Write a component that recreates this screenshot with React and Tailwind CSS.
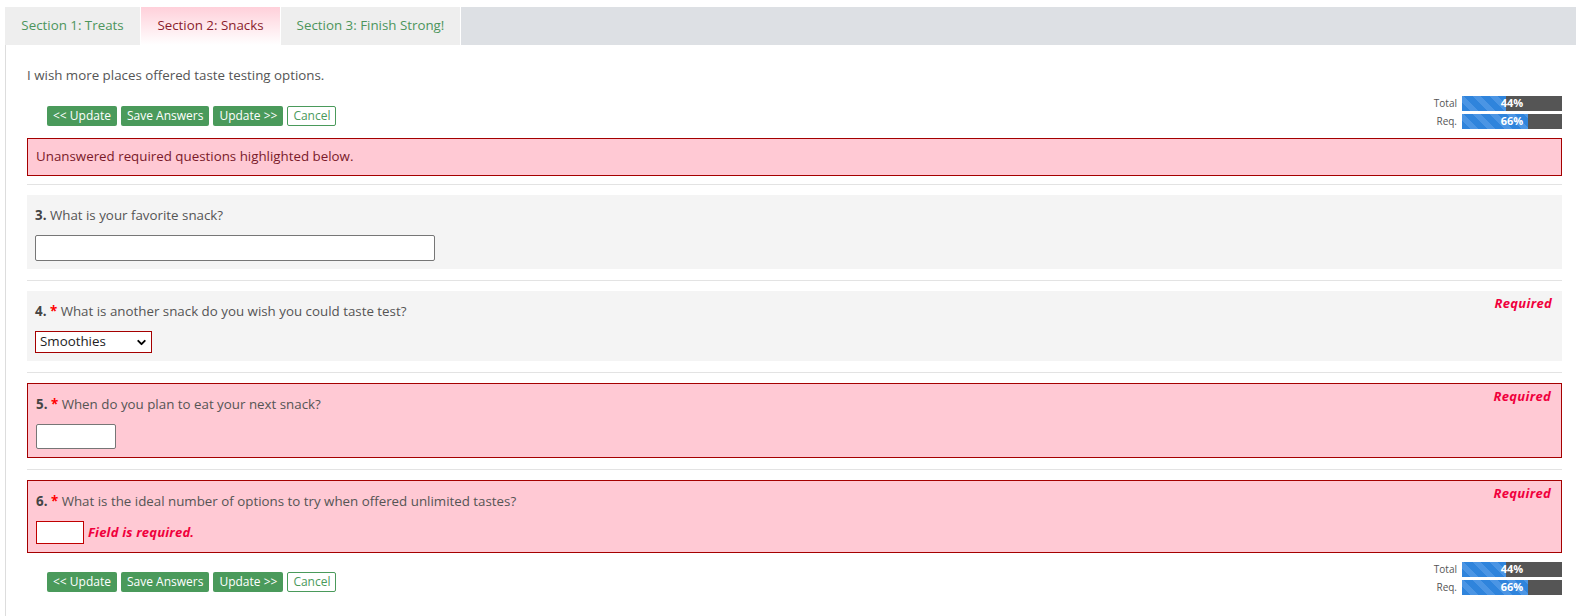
import { ChevronDown } from 'lucide-react'

const tabs = [
  { label: 'Section 1: Treats', width: 'w-[136px]', active: false },
  { label: 'Section 2: Snacks', width: 'w-[140px]', active: true },
  { label: 'Section 3: Finish Strong!', width: 'w-[180px]', active: false },
]

function Buttons() {
  return (
    <div className="flex gap-[4px] text-[12px] leading-none">
      <button className="h-[20px] px-[6px] rounded-[2px] bg-[#4a9a5b] text-white">&lt;&lt; Update</button>
      <button className="h-[20px] px-[6px] rounded-[2px] bg-[#4a9a5b] text-white">Save Answers</button>
      <button className="h-[20px] px-[6px] rounded-[2px] bg-[#4a9a5b] text-white">Update &gt;&gt;</button>
      <button className="h-[20px] px-[5px] rounded-[2px] bg-white border border-[#4a9a5b] text-[#4a9a5b]">Cancel</button>
    </div>
  )
}

function Bar({ label, pct }) {
  return (
    <div className="flex items-center gap-[5px]">
      <span className="w-[40px] text-right text-[10px] text-[#555]">{label}</span>
      <div className="relative w-[100px] h-[15px] bg-[#555]">
        <div
          className="h-full bg-[repeating-linear-gradient(45deg,#2f84dc_0px,#2f84dc_6px,#4b95e4_6px,#4b95e4_12px)]"
          style={{ width: `${pct}%` }}
        />
        <span className="absolute inset-0 flex items-center justify-center text-[11px] font-bold text-white">{pct}%</span>
      </div>
    </div>
  )
}

function ActionRow({ className }) {
  return (
    <div className={`flex justify-between items-start ${className}`}>
      <div className="ml-[20px] pt-[10px]">
        <Buttons />
      </div>
      <div className="flex flex-col gap-[3px]">
        <Bar label="Total" pct={44} />
        <Bar label="Req." pct={66} />
      </div>
    </div>
  )
}

function Question({ num, text, required, error, first, children }) {
  return (
    <>
      <div className={`h-px bg-[#e3e3e3] ${first ? 'mt-[8px]' : 'mt-[11px]'}`} />
      <div
        className={`relative mt-[10px] pl-[8px] pr-[8px] pt-[10px] pb-[8px] ${
          error ? 'bg-[#ffc9d4] border border-[#a50000]' : 'bg-[#f4f4f4]'
        }`}
      >
        {required && (
          <span className="absolute right-[10px] top-[3px] text-[13px] font-bold italic tracking-[0.3px] text-[#f0003c]">
            Required
          </span>
        )}
        <p className="leading-[20px]">
          <b className="text-[#444]">{num}.</b>{' '}
          {required && <b className="text-[#f00]">* </b>}
          {text}
        </p>
        <div className="mt-[10px] flex items-center">{children}</div>
      </div>
    </>
  )
}

export default function App() {
  return (
    <div className="min-h-[616px] bg-white pt-[7px] pl-[5px] font-['Open_Sans',sans-serif] text-[13.33px] text-[#555]">
      <div className="flex h-[38px] bg-[#dde0e4]">
        {tabs.map((t) => (
          <div
            key={t.label}
            className={`${t.width} flex items-center justify-center border-r border-white ${
              t.active
                ? 'bg-gradient-to-b from-[#ffd0da] to-white text-[#8b1c2c]'
                : 'bg-[#eeeeee] text-[#4c955c]'
            }`}
          >
            {t.label}
          </div>
        ))}
      </div>

      <div className="border-l border-[#dddddd] pl-[21px] pr-[14px] pt-[21px] pb-[24px]">
        <p className="leading-[18px]">I wish more places offered taste testing options.</p>

        <ActionRow className="mt-[12px]" />

        <div className="mt-[9px] h-[38px] flex items-center px-[8px] bg-[#ffc9d4] border border-[#a50000] text-[#7a1a2a]">
          Unanswered required questions highlighted below.
        </div>

        <Question num="3" text="What is your favorite snack?" first>
          <input className="w-[400px] h-[26px] bg-white border border-[#767676] rounded-[2px]" />
        </Question>

        <Question num="4" text="What is another snack do you wish you could taste test?" required>
          <div className="relative w-[117px] h-[22px] bg-white border border-[#a50000] flex items-center pl-[4px] text-[#222]">
            Smoothies
            <ChevronDown className="absolute right-[3px] w-[13px] h-[13px] text-black" strokeWidth={3.5} />
          </div>
        </Question>

        <Question num="5" text="When do you plan to eat your next snack?" required error>
          <input className="w-[80px] h-[25px] bg-white border border-[#767676] rounded-[2px]" />
        </Question>

        <Question num="6" text="What is the ideal number of options to try when offered unlimited tastes?" required error>
          <input className="w-[48px] h-[23px] bg-white border border-[#c00000]" />
          <span className="ml-[4px] text-[13px] font-bold italic tracking-[0.2px] text-[#f0003c]">Field is required.</span>
        </Question>

        <ActionRow className="mt-[9px]" />
      </div>
    </div>
  )
}
